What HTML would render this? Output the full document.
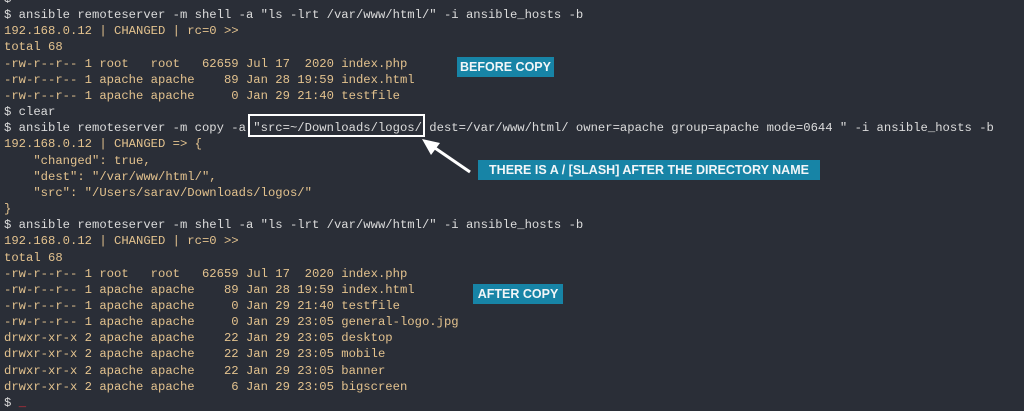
<!DOCTYPE html>
<html><head><style>
body{margin:0;width:1024px;height:410px;background:#2a2e37;overflow:hidden;position:relative;font-family:"Liberation Mono",monospace;font-size:12.23px;}
pre{position:absolute;left:4px;top:-9px;margin:0;line-height:16.15px;font-family:inherit;color:#e3c28e;white-space:pre;}
.c{color:#dcdcdc}
.lbl{position:absolute;background:#1784a6;color:#f2f6f8;font-family:"Liberation Sans",sans-serif;font-weight:bold;font-size:12.5px;height:20px;line-height:20px;text-align:center;}
.box{position:absolute;left:248px;top:114px;width:173px;height:19px;border:2px solid #fff;}
.cur{color:#e0303a}
</style></head><body>
<pre><span class="c">$</span>
<span class="c">$ ansible remoteserver -m shell -a "ls -lrt /var/www/html/" -i ansible_hosts -b</span>
192.168.0.12 | CHANGED | rc=0 >>
total 68
-rw-r--r-- 1 root   root   62659 Jul 17  2020 index.php
-rw-r--r-- 1 apache apache    89 Jan 28 19:59 index.html
-rw-r--r-- 1 apache apache     0 Jan 29 21:40 testfile
<span class="c">$ clear</span>
<span class="c">$ ansible remoteserver -m copy -a "src=~/Downloads/logos/ dest=/var/www/html/ owner=apache group=apache mode=0644 " -i ansible_hosts -b</span>
192.168.0.12 | CHANGED => {
    "changed": true,
    "dest": "/var/www/html/",
    "src": "/Users/sarav/Downloads/logos/"
}
<span class="c">$ ansible remoteserver -m shell -a "ls -lrt /var/www/html/" -i ansible_hosts -b</span>
192.168.0.12 | CHANGED | rc=0 >>
total 68
-rw-r--r-- 1 root   root   62659 Jul 17  2020 index.php
-rw-r--r-- 1 apache apache    89 Jan 28 19:59 index.html
-rw-r--r-- 1 apache apache     0 Jan 29 21:40 testfile
-rw-r--r-- 1 apache apache     0 Jan 29 23:05 general-logo.jpg
drwxr-xr-x 2 apache apache    22 Jan 29 23:05 desktop
drwxr-xr-x 2 apache apache    22 Jan 29 23:05 mobile
drwxr-xr-x 2 apache apache    22 Jan 29 23:05 banner
drwxr-xr-x 2 apache apache     6 Jan 29 23:05 bigscreen
<span class="c">$</span> <span class="cur">_</span></pre>
<div class="box"></div>
<div class="lbl" style="left:457px;top:57px;width:97px;">BEFORE COPY</div>
<div class="lbl" style="left:478px;top:160px;width:342px;">THERE IS A / [SLASH] AFTER THE DIRECTORY NAME</div>
<div class="lbl" style="left:473px;top:284px;width:90px;">AFTER COPY</div>
<svg style="position:absolute;left:0;top:0" width="1024" height="410">
<line x1="470" y1="172" x2="432" y2="146" stroke="#fff" stroke-width="3"/>
<polygon points="422,139 440,143 431,155" fill="#fff"/>
</svg>
</body></html>
